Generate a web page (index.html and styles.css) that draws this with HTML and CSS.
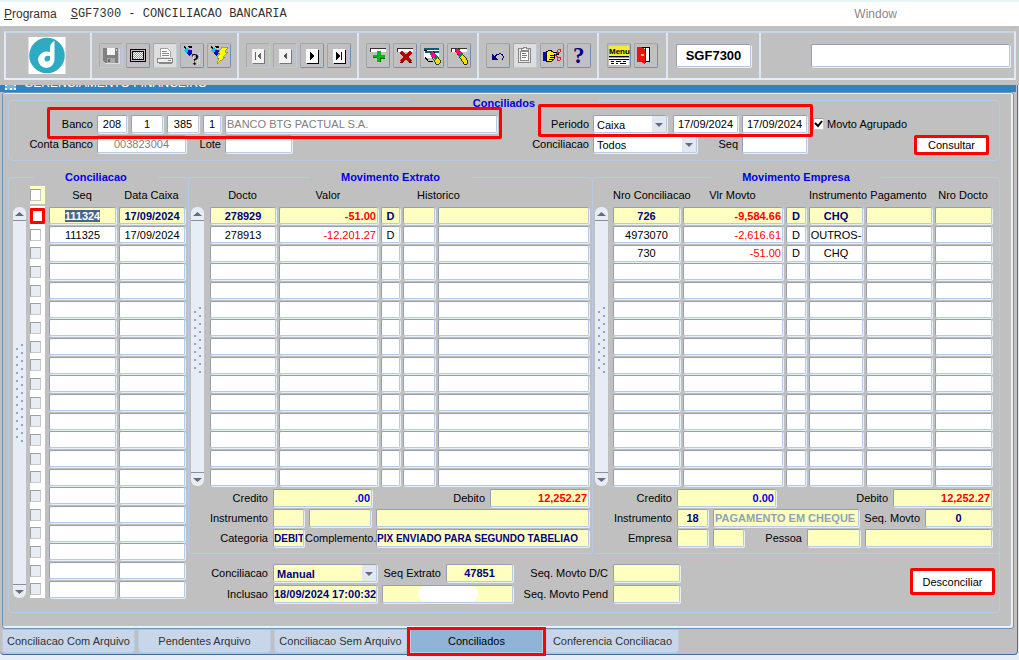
FILE: index.html
```html
<!DOCTYPE html>
<html lang="pt-BR">
<head>
    <meta charset="UTF-8">
    <meta name="viewport" content="width=device-width, initial-scale=1.0">
    <title>SGF7300 - CONCILIACAO BANCARIA</title>
    <link rel="stylesheet" href="styles.css">
</head>
<body>
    <nav class="menu-bar">
        <a href="#" class="menu-item"><u>P</u>rograma</a>
        <span class="menu-title"><u>S</u>GF7300 - CONCILIACAO BANCARIA</span>
        <a href="#" class="menu-item menu-window">Window</a>
    </nav>

    <div class="toolbar-area">
        <div class="toolbar">
            <div class="tool-group logo-group">
                <svg class="logo" viewBox="0 0 37 37" aria-label="Logo">
                    <rect width="37" height="37" fill="#fff"/>
                    <circle cx="18.500" cy="18.500" r="17.800" fill="#2eabc2"/>
                    <path d="M26 4 Q21.500 6 21.500 11 V15 A9 9 0 0 0 9.500 22 A8.500 8.500 0 0 0 18 31 A8.500 8.500 0 0 0 26 22 Z" fill="#fff"/>
                    <path d="M21.500 19 Q16.500 18 16 21.500 Q16 24.500 18.500 24.500 Q21.500 24 21.500 22 Z" fill="#2eabc2"/>
                </svg>
            </div>
            <div class="tool-group">
                <button class="tool off" aria-label="Salvar"><svg viewBox="0 0 24 25"><path d="M4 5h15v15H6l-2-2z" fill="#808080"/><path d="M8 5h8v7H8z" fill="#f4f4f4"/><path d="M8 15h8v5H8z" fill="#a8a8a8"/><path d="M9 16h2v3H9z" fill="#686868"/><path d="M17 6h1v2h-1z" fill="#ddd"/><path d="M6 20h14V6" fill="none" stroke="#ddd"/></svg></button>
                <button class="tool" aria-label="Tela"><svg viewBox="0 0 24 25"><rect x="4.500" y="6.500" width="15" height="12" rx="1" fill="#c0c0c0" stroke="#000"/><rect x="6.500" y="8.500" width="11" height="8" fill="#fff" stroke="#000"/><path d="M7 9.500h10M7 11.500h10M7 13.500h10M7 15.500h10" stroke="#00d8e8" stroke-dasharray="1 1"/><path d="M8 10.500h9M8 12.500h9M8 14.500h9" stroke="#00d8e8" stroke-dasharray="1 1"/></svg></button>
                <button class="tool off light" aria-label="Imprimir"><svg viewBox="0 0 24 25"><path d="M7.500 14V5.500h7l3 3V14" fill="#fff" stroke="#a0a0a0"/><path d="M9 8.500h5M9 10.500h7M9 12.500h7" stroke="#888"/><path d="M4.500 15.500h15v4h-15z" fill="#eee" stroke="#888"/><path d="M15 17.500h3M6 20.500h13" stroke="#888"/></svg></button>
                <button class="tool" aria-label="Entrar consulta"><svg viewBox="0 0 24 25"><path d="M13.500 11v11M15.500 10v12M17.500 11v11M19.500 10v12" stroke="#ffff40" stroke-dasharray="1 1"/><path d="M4 3l3 2-1 1-2-1zM8 3h4v2H9z" fill="#000"/><path d="M4 7l3-2 4 2-3 5z" fill="#00c8f0"/><path d="M8 7h4v3l-2 3-3-2z" fill="#0010c0"/><text x="11" y="22" class="glyph" font-size="16">?</text></svg></button>
                <button class="tool" aria-label="Executar consulta"><svg viewBox="0 0 24 25"><path d="M4 3l3 2-1 1-2-1zM8 3h4v2H9z" fill="#000"/><path d="M4 7l3-2 4 2-3 5z" fill="#00c8f0"/><path d="M8 7h4v3l-2 3-3-2z" fill="#0010c0"/><path d="M15 4h6l-3 5h3l-5 5h2l-8 7 2-6h-2l3-5h-2z" fill="#ff0" stroke="#777030" stroke-width=".6"/></svg></button>
            </div>
            <div class="tool-group">
                <button class="tool off" aria-label="Primeiro"><svg viewBox="0 0 24 25"><path d="M7 7h12v14H7z" fill="#777"/><path d="M6 6h12v14H6z" fill="#f3f3f3"/><path d="M9 9h1v8H9zM15 9v8l-4-4z" fill="#666"/></svg></button>
                <button class="tool off" aria-label="Anterior"><svg viewBox="0 0 24 25"><path d="M7 7h12v14H7z" fill="#777"/><path d="M6 6h12v14H6z" fill="#f3f3f3"/><path d="M14 9v8l-4-4z" fill="#555"/></svg></button>
                <button class="tool" aria-label="Proximo"><svg viewBox="0 0 24 25"><path d="M7 7h12v14H7z" fill="#000"/><path d="M6 6h12v14H6z" fill="#fff"/><path d="M10 9v8l5-4z" fill="#000"/></svg></button>
                <button class="tool" aria-label="Ultimo"><svg viewBox="0 0 24 25"><path d="M7 7h12v14H7z" fill="#000"/><path d="M6 6h12v14H6z" fill="#fff"/><path d="M9 9v8l4-4zM14 9h1v8h-1z" fill="#000"/></svg></button>
            </div>
            <div class="tool-group">
                <button class="tool" aria-label="Inserir"><svg viewBox="0 0 24 25"><path d="M4 5h16v4H4z" fill="#fff"/><path d="M4.500 9V5.500H20" fill="none" stroke="#333"/><path d="M11 8h4v4h4v3h-4v4h-4v-4H7v-3h4z" fill="#00b818"/><path d="M14.500 19v-4H19M7 14.500h4" fill="none" stroke="#006808"/></svg></button>
                <button class="tool" aria-label="Excluir"><svg viewBox="0 0 24 25"><path d="M4 5h16v4H4z" fill="#fff"/><path d="M4.500 9V5.500H20" fill="none" stroke="#333"/><path d="M8 9l10 10M18 9L8 19" stroke="#b80000" stroke-width="3"/><path d="M16 19.500h3M7 19.500h3" stroke="#500"/></svg></button>
                <button class="tool" aria-label="Limpar bloco"><svg viewBox="0 0 24 25"><path d="M4 5h15v10H4z" fill="#fff"/><path d="M4 5.500h15M5 8.500h14" stroke="#006070" stroke-width="2"/><path d="M4 7.500h3M5 14l3 4h5" fill="none" stroke="#000"/><path d="M10 10l3-2 8 10-2 3h-3z" fill="#f0e000" stroke="#000" stroke-width=".7"/><path d="M10 10l3-2 3 4-3 3z" fill="#ff0090"/><path d="M13 15l3-3 2 2-3 3z" fill="#008818"/></svg></button>
                <button class="tool" aria-label="Limpar registro"><svg viewBox="0 0 24 25"><path d="M4 5h16v4H4z" fill="#fff"/><path d="M4.500 9V5.500H20" fill="none" stroke="#333"/><path d="M8 7l3-2 10 13-1 3h-3z" fill="#f0e000" stroke="#000" stroke-width=".8"/><path d="M8 7l3-2 3 4-3 3z" fill="#ff0070"/><path d="M11 12l3-3 2 2-3 4z" fill="#008818"/></svg></button>
            </div>
            <div class="tool-group">
                <button class="tool" aria-label="Desfazer"><svg viewBox="0 0 24 25"><path d="M6 11v6h6z" fill="#000080"/><path d="M8 15q3-5 7-4q4 2 1 6" fill="none" stroke="#000080"/></svg></button>
                <button class="tool off light" aria-label="Colar"><svg viewBox="0 0 24 25"><rect x="5.500" y="5.500" width="12" height="14" fill="#e8e8e8" stroke="#888"/><rect x="7.500" y="8.500" width="8" height="9" fill="#fff" stroke="#888"/><path d="M8 7V5h2V4h3v1h2v2z" fill="#eee" stroke="#888"/><path d="M9 10.500h4M9 12.500h5M9 14.500h4" stroke="#777"/></svg></button>
                <button class="tool" aria-label="Lista de valores"><svg viewBox="0 0 24 25"><path d="M3 9h3v9H3z" fill="#0000d0"/><path d="M6 9l4-2 3 2h5v2h-4l1 4-3 3H6z" fill="#f6ec38" stroke="#000"/><path d="M10 12.500h5M10 14.500h4M9 16.500h4" stroke="#000"/><path d="M15 12l4-3M15 12l4 3" stroke="#e02020"/><circle cx="19" cy="8" r="1.500" fill="none" stroke="#e02020"/><circle cx="19" cy="16" r="1.500" fill="none" stroke="#e02020"/></svg></button>
                <button class="tool" aria-label="Ajuda"><svg viewBox="0 0 24 25"><text x="6" y="20" class="glyph navy" font-size="23">?</text></svg></button>
            </div>
            <div class="tool-group group-wide">
                <button class="tool" aria-label="Menu"><svg viewBox="0 0 24 25"><path d="M2 3h20v10H2z" fill="#f4ec30"/><text x="2" y="11" class="menu-glyph">Menu</text><path d="M2 13h20v9H2z" fill="#fff"/><path d="M2 14.500h20" stroke="#00d8e8"/><path d="M2 13.500h20M2 16.500h20M4 18.500h3M9 18.500h5M16 18.500h3M4 20.500h3M9 20.500h2M13 20.500h6" stroke="#000"/></svg></button>
                <button class="tool" aria-label="Sair"><svg viewBox="0 0 24 25"><path d="M5 4.500h10v14H9" fill="#fff" stroke="#000"/><path d="M3 4h4l4 2v15l-4-2H3z" fill="#f01010"/><path d="M11 5v15" stroke="#700"/><path d="M7 11h3v2H7z" fill="#f8d838"/></svg></button>
            </div>
            <div class="tool-group group-wide">
                <input type="text" class="field program-code" aria-label="Programa" value="SGF7300">
            </div>
            <div class="tool-group user-group">
                <input type="text" class="field user-name" aria-label="Usuario">
            </div>
        </div>
    </div>

    <main class="window">
        <div class="window-title"><span class="window-icon"></span><span>GERENCIAMENTO FINANCEIRO</span></div>
        <div class="canvas">
            <fieldset class="filters">
                <legend>Conciliados</legend>
                <div class="filter-form">
                    <div class="filter-row">
                        <div class="filter-left marked mark-banco">
                            <label class="lbl" for="banco">Banco</label>
                            <input type="text" class="field center w30" id="banco" value="208">
                            <input type="text" class="field center w32" aria-label="Filial" value="1">
                            <input type="text" class="field center w32" aria-label="Agencia" value="385">
                            <input type="text" class="field center w18" aria-label="Digito" value="1">
                            <input type="text" class="field grow gray" aria-label="Nome do banco" value="BANCO BTG PACTUAL S.A." readonly>
                        </div>
                        <div class="filter-mid marked mark-periodo">
                            <label class="lbl" for="periodo">Periodo</label>
                            <select class="field combo w74" id="periodo"><option>Caixa</option></select>
                            <input type="text" class="field center w65 push" aria-label="Data inicial" value="17/09/2024">
                            <input type="text" class="field center w65" aria-label="Data final" value="17/09/2024">
                        </div>
                        <label class="grouped"><input type="checkbox" class="check" checked>Movto Agrupado</label>
                    </div>
                    <div class="filter-row">
                        <div class="filter-left">
                            <label class="lbl" for="conta">Conta Banco</label>
                            <input type="text" class="field center gray w89" id="conta" value="003823004" readonly>
                            <label class="lote" for="lote">Lote</label>
                            <input type="text" class="field w67" id="lote">
                        </div>
                        <div class="filter-mid">
                            <label class="lbl" for="situacao">Conciliacao</label>
                            <select class="field combo w104" id="situacao"><option>Todos</option></select>
                            <label class="push" for="seq">Seq</label>
                            <input type="text" class="field w65" id="seq">
                        </div>
                        <button class="action consultar">Consultar</button>
                    </div>
                </div>
            </fieldset>

            <div class="blocks">
                <fieldset class="block block-conc">
                    <legend>Conciliacao</legend>
                    <div class="grid-area">
                        <div class="scroll scroll-long">
                            <button class="arrow up" aria-label="Subir"></button>
                            <span class="grip"></span>
                            <button class="arrow down" aria-label="Descer"></button>
                        </div>
                        <table class="rows" id="conciliacao">
                            <colgroup><col class="c-check"><col class="c-70"><col></colgroup>
                            <thead>
                                <tr><th class="check-head"><input type="checkbox" class="check" aria-label="Marcar todos"></th><th>Seq</th><th>Data Caixa</th></tr>
                            </thead>
                            <tbody></tbody>
                        </table>
                    </div>
                </fieldset>

                <div class="right-side">
                    <div class="moves">
                        <fieldset class="block block-extrato">
                            <legend>Movimento Extrato</legend>
                            <div class="grid-area">
                                <div class="scroll">
                                    <button class="arrow up" aria-label="Subir"></button>
                                    <span class="grip"></span>
                                    <button class="arrow down" aria-label="Descer"></button>
                                </div>
                                <table class="rows" id="extrato">
                                    <colgroup><col class="c-69"><col class="c-102"><col class="c-22"><col class="c-35"><col></colgroup>
                                    <thead>
                                        <tr><th>Docto</th><th>Valor</th><th></th><th colspan="2" class="historico">Historico</th></tr>
                                    </thead>
                                    <tbody></tbody>
                                </table>
                            </div>
                            <div class="totals">
                                <div class="line">
                                    <label class="lbl" for="e-credito">Credito</label>
                                    <input type="text" class="field yellow right blue w99" id="e-credito" value=".00">
                                    <label class="push" for="e-debito">Debito</label>
                                    <input type="text" class="field yellow right red w99" id="e-debito" value="12,252.27">
                                </div>
                                <div class="line">
                                    <label class="lbl" for="e-instr">Instrumento</label>
                                    <input type="text" class="field yellow w31" id="e-instr">
                                    <input type="text" class="field yellow w62" aria-label="Nome do instrumento">
                                    <input type="text" class="field yellow grow" aria-label="Descricao do instrumento">
                                </div>
                                <div class="line">
                                    <label class="lbl" for="e-categ">Categoria</label>
                                    <input type="text" class="field yellow dense w31" id="e-categ" value="DEBIT">
                                    <label class="compl" for="e-compl">Complemento.</label>
                                    <input type="text" class="field yellow dense grow" id="e-compl" value="PIX ENVIADO PARA SEGUNDO TABELIAO">
                                </div>
                            </div>
                        </fieldset>

                        <fieldset class="block block-empresa">
                            <legend>Movimento Empresa</legend>
                            <div class="grid-area">
                                <div class="scroll">
                                    <button class="arrow up" aria-label="Subir"></button>
                                    <span class="grip"></span>
                                    <button class="arrow down" aria-label="Descer"></button>
                                </div>
                                <table class="rows" id="empresa">
                                    <colgroup><col class="c-70"><col class="c-103"><col class="c-23"><col class="c-57"><col class="c-69"><col></colgroup>
                                    <thead>
                                        <tr><th>Nro Conciliacao</th><th>Vlr Movto</th><th></th><th>Instrumento</th><th>Pagamento</th><th>Nro Docto</th></tr>
                                    </thead>
                                    <tbody></tbody>
                                </table>
                            </div>
                            <div class="totals">
                                <div class="line">
                                    <label class="lbl" for="m-credito">Credito</label>
                                    <input type="text" class="field yellow right blue w99" id="m-credito" value="0.00">
                                    <label class="push" for="m-debito">Debito</label>
                                    <input type="text" class="field yellow right red w99" id="m-debito" value="12,252.27">
                                </div>
                                <div class="line">
                                    <label class="lbl" for="m-instr">Instrumento</label>
                                    <input type="text" class="field yellow center w31" id="m-instr" value="18">
                                    <input type="text" class="field yellow grow faded" aria-label="Nome do instrumento" value="PAGAMENTO EM CHEQUE">
                                    <label for="m-seq">Seq. Movto</label>
                                    <input type="text" class="field yellow center w67" id="m-seq" value="0">
                                </div>
                                <div class="line">
                                    <label class="lbl" for="m-empresa">Empresa</label>
                                    <input type="text" class="field yellow w31" id="m-empresa">
                                    <input type="text" class="field yellow w31" aria-label="Filial da empresa">
                                    <label class="push" for="m-pessoa">Pessoa</label>
                                    <input type="text" class="field yellow w53" id="m-pessoa">
                                    <input type="text" class="field yellow w127" aria-label="Nome da pessoa">
                                </div>
                            </div>
                        </fieldset>
                    </div>

                    <div class="details">
                        <div class="detail-lines">
                            <div class="line">
                                <label class="lbl" for="tipo">Conciliacao</label>
                                <select class="field yellow combo w104" id="tipo"><option>Manual</option></select>
                                <label class="seq-extrato" for="seq-extrato">Seq Extrato</label>
                                <input type="text" class="field yellow center w67" id="seq-extrato" value="47851">
                                <label class="lbl lbl-wide" for="seq-dc">Seq. Movto D/C</label>
                                <input type="text" class="field yellow w67" id="seq-dc">
                            </div>
                            <div class="line">
                                <label class="lbl" for="inclusao">Inclusao</label>
                                <input type="text" class="field yellow tight w104" id="inclusao" value="18/09/2024 17:00:32">
                                <span class="erased"><input type="text" class="field yellow grow" aria-label="Usuario da inclusao"></span>
                                <label class="lbl lbl-wide" for="seq-pend">Seq. Movto Pend</label>
                                <input type="text" class="field yellow w67" id="seq-pend">
                            </div>
                        </div>
                        <button class="action desconciliar">Desconciliar</button>
                    </div>
                </div>
            </div>
        </div>

        <div class="tabs">
            <button class="tab">Conciliacao Com Arquivo</button>
            <button class="tab">Pendentes Arquivo</button>
            <button class="tab">Conciliacao Sem Arquivo</button>
            <button class="tab active">Conciliados</button>
            <button class="tab">Conferencia Conciliacao</button>
        </div>
    </main>

    <script src="script.js"></script>
</body>
</html>
```
FILE: styles.css
```css
* {
    box-sizing: border-box;
}
body {
    margin: 0;
    min-height: 100vh;
    font-family: "Liberation Sans", Arial, sans-serif;
    font-size: 11px;
    line-height: 14px;
    color: #000;
    background: #e8edf5;
    border-top: 2px solid #e6f5f5;
}
button, input, select {
    font: inherit;
    color: inherit;
    margin: 0;
}
button {
    padding: 0;
    cursor: pointer;
}
label {
    white-space: nowrap;
}

/* menu */
.menu-bar {
    display: flex;
    align-items: center;
    height: 24px;
    padding: 0 122px 0 4px;
    background: #fff;
}
.menu-item {
    font-size: 12px;
    color: #333;
    text-decoration: none;
}
.menu-title {
    margin-left: 14px;
    font-family: "Liberation Mono", "Courier New", monospace;
    font-size: 12px;
    color: #333;
}
.menu-window {
    margin-left: auto;
    color: #888;
}

/* toolbar */
.toolbar-area {
    padding: 5px 3px 5px 4px;
    background: #c0c0c0;
}
.toolbar {
    display: flex;
    height: 49px;
    border: 2px solid;
    border-color: #c4d6ea #dfe9f5 #e6eef8 #dfe9f5;
}
.tool-group {
    display: flex;
    align-items: center;
    gap: 3px;
    padding: 0 6px 0 7px;
    border-right: 2px solid #dce7f4;
}
.tool-group:last-child {
    border-right: 0;
}
.tool-group.group-wide {
    padding: 0 8px;
}
.tool-group.logo-group {
    padding: 0 24px 0 22px;
}
.logo {
    width: 38px;
    height: 37px;
}
.tool {
    width: 24px;
    height: 25px;
    background: #c0c0c0;
    border: 1px solid;
    border-color: #a4a4a4 #6f8fb4 #6f8fb4 #a4a4a4;
    border-radius: 2px;
}
.tool svg {
    display: block;
    width: 24px;
    height: 25px;
    margin: -1px;
    shape-rendering: crispEdges;
}
.tool.off {
    border-color: #aaa #b8cce4 #b8cce4 #aaa;
}
.tool.light {
    background: #dedede;
}
.glyph {
    font-family: "Liberation Serif", serif;
    font-weight: bold;
}
.navy {
    fill: #000080;
}
.menu-glyph {
    font-size: 8px;
    font-weight: bold;
}

/* fields */
.field {
    display: block;
    min-width: 0;
    height: 18px;
    padding: 0 1px;
    background-color: #fff;
    border: 1px solid;
    border-color: #98a0b0 #b4cae6 #b4cae6 #98a0b0;
    border-radius: 2px;
    box-shadow: 1px 1px 0 #e6eef8;
    outline: none;
}
.field.program-code {
    width: 75px;
    height: 23px;
    font-size: 13px;
    font-weight: bold;
    text-align: center;
}
.tool-group.user-group {
    flex: 1;
    padding: 0 4px 0 50px;
}
.field.user-name {
    flex: 1;
    height: 23px;
}
.yellow {
    background-color: #ffffc0;
    color: #000080;
    font-weight: bold;
}
.tight {
    padding: 0;
}
.dense {
    padding: 0;
    font-size: 10px;
}
.center { text-align: center; }
.right { text-align: right; }
.gray { color: #808080; }
.blue { color: #0000e0; }
.red { color: #f00; }
.faded { color: #8ea4b4; }
.grow { flex: 1; }
.push { margin-left: auto; }
.w18 { width: 18px; }
.w30 { width: 30px; }
.w31 { width: 31px; }
.w32 { width: 32px; }
.w53 { width: 53px; }
.w62 { width: 62px; }
.w65 { width: 65px; }
.w67 { width: 67px; }
.w74 { width: 74px; }
.w89 { width: 89px; }
.w99 { width: 99px; }
.w104 { width: 104px; }
.w127 { width: 127px; }
.combo {
    appearance: none;
    padding: 2px 16px 0 3px;
    line-height: 14px;
    background-image: url("data:image/svg+xml,%3Csvg xmlns='http://www.w3.org/2000/svg' width='14' height='16'%3E%3Crect width='14' height='16' fill='%23e2e8f0'/%3E%3Cpath d='M3 7h8l-4 4z' fill='%23666c80'/%3E%3C/svg%3E");
    background-repeat: no-repeat;
    background-position: right top;
}
.check {
    appearance: none;
    display: block;
    width: 11px;
    height: 12px;
    background: #fff;
    border: 1px solid;
    border-color: #a0a0a0 #c8c8c8 #c8c8c8 #a0a0a0;
}
.check:disabled {
    background: #e8edf5;
}
.check:checked {
    background: #fff url("data:image/svg+xml,%3Csvg xmlns='http://www.w3.org/2000/svg' width='9' height='10'%3E%3Cpath d='M1 4l3 3 4-5' fill='none' stroke='black' stroke-width='2'/%3E%3C/svg%3E") no-repeat;
}

/* window */
.window {
    background: #c0c0c0;
    margin-right: 1px;
    border-right: 1px solid #4a6a98;
    border-bottom: 1px solid #4a6a98;
    border-radius: 0 0 4px 4px;
}
/* the title bar is mostly hidden under the toolbar */
.window-title {
    display: flex;
    align-items: flex-end;
    gap: 8px;
    height: 7px;
    margin-right: 1px;
    padding: 0 0 2px 5px;
    overflow: hidden;
    font-size: 12px;
    line-height: 13px;
    color: #fff;
    background: #2c84c4;
}
.window-icon {
    width: 11px;
    height: 9px;
    background: #6fb4e4;
    border: 2px dotted #fff;
}
.canvas {
    margin: 0 3px 0 2px;
    padding: 1px 13px 15px 5px;
    border: 1px solid #6f93b8;
    border-radius: 3px;
    box-shadow: inset -2px -2px 0 #e8f0f8, inset 0 1px 0 #e8f0f8;
}
fieldset {
    min-width: 0;
    margin: 0;
    padding: 0;
    border: 1px solid #b4cae6;
    border-radius: 4px;
}
legend {
    margin: 0 auto;
    padding: 0 31px;
    font-weight: bold;
    color: #0000e8;
}
.filters legend {
    padding: 6px 63px 0;
    line-height: 6px;
}
.filter-form {
    display: flex;
    flex-direction: column;
    gap: 2px;
    padding: 9px 10px 7px 0;
}
.filter-row {
    display: flex;
    height: 18px;
}
.filter-left, .filter-mid, .line {
    display: flex;
    align-items: center;
    gap: 4px;
}
.filter-left {
    width: 488px;
}
.filter-left .lbl {
    width: 84px;
    text-align: right;
}
.filter-left .lote {
    width: 31px;
    text-align: right;
}
.filter-mid {
    width: 310px;
    margin-right: 6px;
}
.filter-mid .lbl {
    width: 92px;
    text-align: right;
}
.grouped {
    display: flex;
    align-items: center;
    gap: 3px;
}

/* red highlight frames */
.marked {
    position: relative;
}
.marked::after {
    content: "";
    position: absolute;
    z-index: 1;
    border: 3px solid #f00;
    border-radius: 2px;
    pointer-events: none;
}
.mark-banco::after {
    inset: -8px -5px -6px 38px;
}
.mark-periodo::after {
    inset: -11px -6px -4px 41px;
}
.action {
    background: #fff;
    border: 3px solid #f00;
    border-radius: 2px;
}
.consultar {
    width: 75px;
    height: 20px;
    margin-left: auto;
}
.desconciliar {
    width: 85px;
    height: 27px;
    margin-top: 4px;
}

/* blocks */
.blocks {
    display: flex;
    margin-top: 9px;
}
.block-conc {
    width: 180px;
    border-right: 0;
    border-radius: 4px 0 0 4px;
}
.block-conc legend {
    margin-left: 25px;
}
.right-side {
    display: flex;
    flex: 1;
    flex-direction: column;
    min-width: 0;
}
.moves {
    display: flex;
}
.block-extrato {
    flex: 1 1 404px;
    border-right: 0;
}
.block-empresa {
    flex: 1 1 408px;
    border-bottom-right-radius: 0;
}
.grid-area {
    display: flex;
    gap: 6px;
    padding: 0 0 0 2px;
}
.block-empresa .grid-area {
    gap: 5px;
    padding-right: 4px;
}
.block-conc .grid-area {
    gap: 4px;
    padding: 0 0 14px 4px;
}
.scroll {
    display: flex;
    flex: 0 0 13px;
    flex-direction: column;
    justify-content: space-between;
    align-items: center;
    margin-top: 23px;
    background: #e8edf5;
    border-radius: 6px;
}
.arrow {
    width: 13px;
    height: 14px;
    border: 0;
    background: no-repeat url("data:image/svg+xml,%3Csvg xmlns='http://www.w3.org/2000/svg' width='13' height='14'%3E%3Cpath d='M2 9h9l-4.500-4z' fill='%23666c80'/%3E%3Cpath d='M0 13.500h13' stroke='%238890a0'/%3E%3C/svg%3E");
}
.arrow.down {
    background-image: url("data:image/svg+xml,%3Csvg xmlns='http://www.w3.org/2000/svg' width='13' height='14'%3E%3Cpath d='M2 6h9l-4.500 4z' fill='%23666c80'/%3E%3Cpath d='M0 .5h13' stroke='%238890a0'/%3E%3C/svg%3E");
}
.grip {
    width: 9px;
    height: 68px;
    margin-bottom: 14px;
    background-image: radial-gradient(circle at 2px 6px, #8ea6c4 1px, transparent 1px), radial-gradient(circle at 7px 2px, #8ea6c4 1px, transparent 1px);
    background-size: 9px 8px;
}
.scroll-long .grip {
    height: 100px;
    margin-bottom: 20px;
}
.rows {
    flex: 1;
    min-width: 0;
    width: 0;
    table-layout: fixed;
    border-collapse: collapse;
}
.rows th {
    height: 22px;
    padding: 0 4px 0 0;
    font-weight: normal;
    white-space: nowrap;
}
.rows td {
    padding: 0 3px 0 0;
}
.rows th.historico {
    padding-left: 14px;
    text-align: left;
}
.rows tbody tr {
    height: 19px;
}
.rows tbody tr:nth-child(3n) {
    height: 18px;
}
.rows .field {
    width: 100%;
    height: 17px;
}
.c-check { width: 19px; }
.c-22 { width: 22px; }
.c-23 { width: 23px; }
.c-35 { width: 35px; }
.c-57 { width: 57px; }
.c-69 { width: 69px; }
.c-70 { width: 70px; }
.c-102 { width: 102px; }
.c-103 { width: 103px; }
.rows .check-cell, .rows .check-head {
    padding: 0;
    background: linear-gradient(to right, #fff 15px, transparent 15px);
}
.rows .check-head {
    background: linear-gradient(to right, #ffffc0 15px, transparent 15px) 0 2px / 100% 18px no-repeat;
}
.check-cell.current .check {
    width: 15px;
    height: 16px;
    border: 3px solid #f00;
    border-radius: 1px;
}
.picked::selection {
    color: #fff;
    background: #4a6488;
}
.totals {
    display: flex;
    flex-direction: column;
    gap: 2px;
    padding: 3px 3px 6px 0;
}
.block-empresa .totals {
    padding-right: 7px;
}
.line {
    height: 18px;
    gap: 5px;
}
.totals .lbl, .details .lbl {
    width: 79px;
    text-align: right;
}
.totals .compl {
    width: 66px;
    margin: 0 0 0 -4px;
}
.details {
    display: flex;
    flex: 1;
    justify-content: space-between;
    padding: 10px 4px 9px 1px;
    border: 1px solid #b4cae6;
    border-width: 0 1px 1px 0;
    border-bottom-right-radius: 4px;
}
.detail-lines {
    display: flex;
    flex-direction: column;
    gap: 3px;
}
.details .seq-extrato {
    width: 59px;
    text-align: right;
}
.details .lbl-wide {
    width: 90px;
}
.erased {
    display: flex;
    position: relative;
    width: 131px;
}
/* white smear that hides the user name */
.erased::after {
    content: "";
    position: absolute;
    top: 1px;
    left: 36px;
    width: 60px;
    height: 16px;
    border-radius: 8px;
    background: #fff;
}

/* tabs */
.tabs {
    display: flex;
    gap: 3px;
    height: 25px;
    padding: 1px 0 1px 2px;
}
.tab {
    width: 133px;
    color: #333;
    background: #c8d6ea;
    border: 1px solid #b8cce4;
    border-top: 0;
    border-radius: 0 0 4px 4px;
}
.tab.active {
    color: #000;
    background: #90b4d8;
    border-radius: 0;
    outline: 3px solid #f00;
}
```
FILE: script.js
```js
const conciliacao = [
    ["111324", "17/09/2024"],
    ["111325", "17/09/2024"]
];
const extrato = [
    ["278929", "-51.00", "D", "", ""],
    ["278913", "-12,201.27", "D", "", ""]
];
const empresa = [
    ["726", "-9,584.66", "D", "CHQ", "", ""],
    ["4973070", "-2,616.61", "D", "OUTROS-", "", ""],
    ["730", "-51.00", "D", "CHQ", "", ""]
];

function fillTable(id, names, data, total, withCheck) {
    const body = document.querySelector("#" + id + " tbody");
    for (let i = 0; i < total; i++) {
        const row = body.insertRow();
        if (withCheck) {
            const cell = row.insertCell();
            cell.className = i === 0 ? "check-cell current" : "check-cell";
            const check = document.createElement("input");
            check.type = "checkbox";
            check.className = "check";
            check.disabled = i >= data.length;
            check.setAttribute("aria-label", "Marcar linha " + (i + 1));
            cell.appendChild(check);
        }
        names.forEach((name, col) => {
            const input = document.createElement("input");
            const value = data[i] ? data[i][col] : "";
            input.type = "text";
            input.value = value;
            input.className = "field " + (name.startsWith("Valor") ? "right" : "center");
            if (name === "Instrumento") input.classList.add("tight");
            if (i === 0) input.classList.add("yellow");
            if (value.startsWith("-")) input.classList.add("red");
            input.setAttribute("aria-label", name + " " + (i + 1));
            row.insertCell().appendChild(input);
        });
    }
}

fillTable("conciliacao", ["Seq", "Data Caixa"], conciliacao, 21, true);
fillTable("extrato", ["Docto", "Valor", "Tipo", "Historico", "Descricao"], extrato, 15, false);
fillTable("empresa", ["Nro Conciliacao", "Valor Movto", "Tipo", "Instrumento", "Pagamento", "Nro Docto"], empresa, 15, false);

// first record starts focused, with its number selected
const first = document.querySelector("#conciliacao tbody input[type=text]");
first.classList.add("picked");
first.focus();
first.select();
```
